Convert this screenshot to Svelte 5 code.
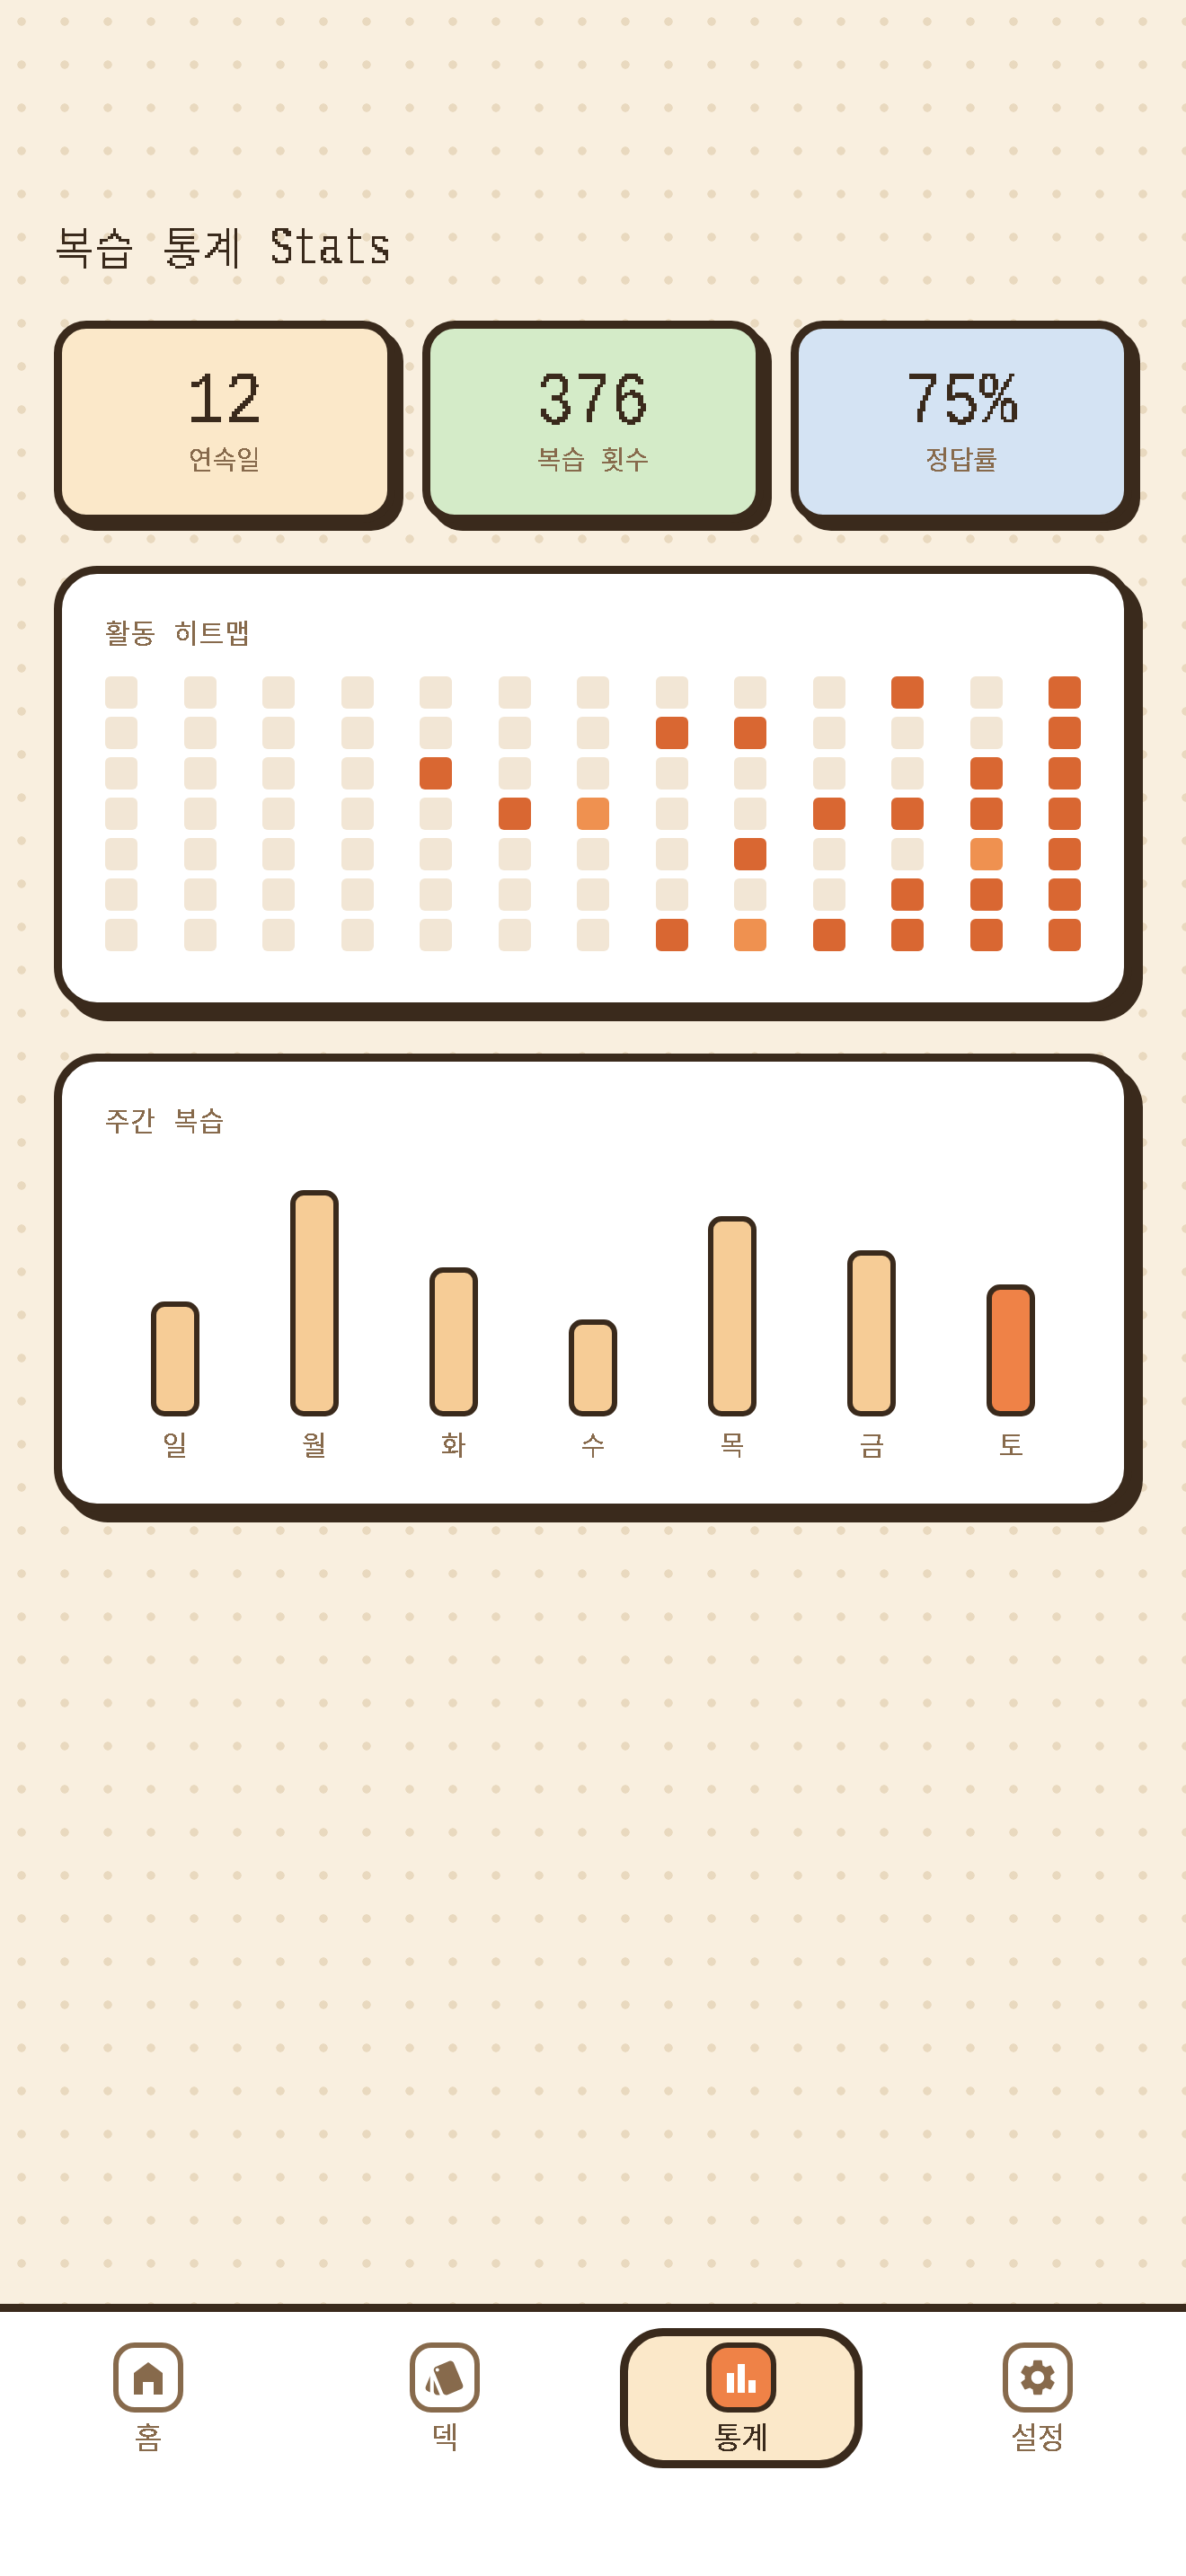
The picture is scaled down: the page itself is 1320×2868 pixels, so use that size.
<script>
  const stats = [
    { value: '12', label: '연속일', cls: 'peach' },
    { value: '376', label: '복습 횟수', cls: 'green' },
    { value: '75%', label: '정답률', cls: 'blue' }
  ];
  const hot = {
    '4-2': 'h', '5-3': 'h', '6-3': 'm', '7-1': 'h', '7-6': 'h', '8-1': 'h', '8-4': 'h', '8-6': 'm',
    '9-3': 'h', '9-6': 'h', '10-0': 'h', '10-3': 'h', '10-5': 'h', '10-6': 'h',
    '11-2': 'h', '11-3': 'h', '11-4': 'm', '11-5': 'h', '11-6': 'h',
    '12-0': 'h', '12-1': 'h', '12-2': 'h', '12-3': 'h', '12-4': 'h', '12-5': 'h', '12-6': 'h'
  };
  const cols = Array.from({ length: 13 }, (_, i) => i);
  const rows = Array.from({ length: 7 }, (_, i) => i);
  const bars = [
    { d: '일', h: 128 }, { d: '월', h: 252 }, { d: '화', h: 166 }, { d: '수', h: 108 },
    { d: '목', h: 223 }, { d: '금', h: 185 }, { d: '토', h: 147, today: true }
  ];
</script>

<svg class="defs" width="0" height="0" aria-hidden="true">
  <filter id="pix" x="0" y="0" width="100%" height="100%" color-interpolation-filters="sRGB">
    <feFlood x="1" y="1" width="1" height="1" flood-color="#000" />
    <feComposite width="3" height="3" />
    <feTile result="grid" />
    <feComposite in="SourceGraphic" in2="grid" operator="in" />
    <feMorphology operator="dilate" radius="1" />
    <feComponentTransfer>
      <feFuncA type="discrete" tableValues="0 0 1 1" />
    </feComponentTransfer>
  </filter>
  <filter id="crisp" x="0" y="0" width="100%" height="100%" color-interpolation-filters="sRGB">
    <feComponentTransfer>
      <feFuncA type="discrete" tableValues="0 1 1" />
    </feComponentTransfer>
  </filter>
</svg>

<div class="page">
  <main>
    <h1>복습 통계 <span class="latin">Stats</span></h1>
    <div class="stats">
      {#each stats as s}
        <div class="stat {s.cls}">
          <div class="value"><span>{s.value}</span></div>
          <div class="label">{s.label}</div>
        </div>
      {/each}
    </div>

    <section class="card heat">
      <h2>활동 히트맵</h2>
      <div class="grid">
        {#each cols as c}
          <div class="col">
            {#each rows as r}
              <span class="cell {hot[c + '-' + r] ?? ''}"></span>
            {/each}
          </div>
        {/each}
      </div>
    </section>

    <section class="card week">
      <h2>주간 복습</h2>
      <div class="bars">
        {#each bars as b}
          <div class="barcol">
            <div class="bar" class:today={b.today} style="height:{b.h}px"></div>
            <span class="day">{b.d}</span>
          </div>
        {/each}
      </div>
    </section>
  </main>

  <nav>
    <div class="item">
      <div class="ic">
        <svg viewBox="0 0 48 48" width="48" height="48"><path d="M8 19 24 7l16 12v24H30V29H18v14H8z" /></svg>
      </div>
      <span class="nl">홈</span>
    </div>
    <div class="item">
      <div class="ic">
        <svg viewBox="0 0 24 24" width="48" height="48"><path d="M2.53 19.65l1.34.56v-9.03l-2.43 5.86c-.41 1.02.08 2.19 1.09 2.61zm19.5-3.7L17.07 3.98c-.31-.75-1.04-1.21-1.81-1.23-.26 0-.53.04-.79.15L7.1 5.95c-.75.31-1.21 1.03-1.23 1.8-.01.27.04.54.15.8l4.96 11.97c.31.76 1.05 1.22 1.83 1.23.26 0 .52-.05.77-.15l7.36-3.05c1.02-.42 1.51-1.59 1.09-2.6zM7.88 8.75c-.55 0-1-.45-1-1s.45-1 1-1 1 .45 1 1-.45 1-1 1zm-2 11c0 1.1.9 2 2 2h1.45l-3.45-8.34v6.34z" /></svg>
      </div>
      <span class="nl">덱</span>
    </div>
    <div class="item active">
      <div class="ic">
        <svg viewBox="0 0 48 48" width="48" height="48"><rect x="8" y="19" width="8" height="22" /><rect x="20" y="9" width="8" height="32" /><rect x="32" y="27" width="8" height="14" /></svg>
      </div>
      <span class="nl">통계</span>
    </div>
    <div class="item">
      <div class="ic">
        <svg viewBox="0 0 24 24" width="48" height="48"><path d="M19.14 12.94c.04-.3.06-.61.06-.94 0-.32-.02-.64-.07-.94l2.03-1.58c.18-.14.23-.41.12-.61l-1.92-3.32c-.12-.22-.37-.29-.59-.22l-2.39.96c-.5-.38-1.03-.7-1.62-.94l-.36-2.54c-.04-.24-.24-.41-.48-.41h-3.84c-.24 0-.43.17-.47.41l-.36 2.54c-.59.24-1.13.57-1.62.94l-2.39-.96c-.22-.08-.47 0-.59.22L2.74 8.87c-.12.21-.08.47.12.61l2.03 1.58c-.05.3-.09.63-.09.94s.02.64.07.94l-2.03 1.58c-.18.14-.23.41-.12.61l1.92 3.32c.12.22.37.29.59.22l2.39-.96c.5.38 1.03.7 1.62.94l.36 2.54c.05.24.24.41.48.41h3.84c.24 0 .44-.17.47-.41l.36-2.54c.59-.24 1.13-.56 1.62-.94l2.39.96c.22.08.47 0 .59-.22l1.92-3.32c.12-.22.07-.47-.12-.61l-2.01-1.58zM12 15.6c-1.98 0-3.6-1.62-3.6-3.6s1.62-3.6 3.6-3.6 3.6 1.62 3.6 3.6-1.62 3.6-3.6 3.6z" /></svg>
      </div>
      <span class="nl">설정</span>
    </div>
  </nav>
</div>

<style>
  :global(body) {
    margin: 0;
    background: #f9efdf;
  }
  .defs { position: absolute; }
  .page {
    height: 2868px;
    display: flex;
    flex-direction: column;
    background-color: #f9efdf;
    background-image: radial-gradient(circle, #e9d9bf 4.4px, transparent 5px);
    background-size: 48px 48px;
    font-family: "Liberation Mono", "Noto Sans CJK KR", monospace;
    color: #3a2a1c;
  }
  main {
    flex: 1;
    padding: 245px 60px 0;
    box-sizing: border-box;
  }
  h1 {
    margin: 0 0 40px;
    font-size: 48px;
    font-weight: 400;
    line-height: 72px;
    height: 72px;
    letter-spacing: 1px;
    filter: url(#pix);
    white-space: nowrap;
  }
  .latin {
    display: inline-block;
    font-size: 62px;
    line-height: 1;
    letter-spacing: 0;
    transform: scaleX(0.73);
    transform-origin: 0 50%;
  }
  .stats {
    display: grid;
    grid-template-columns: repeat(3, 380px);
    gap: 30px;
    margin-bottom: 48px;
  }
  .stat {
    height: 225px;
    box-sizing: border-box;
    border: 9px solid #3a2a1c;
    border-radius: 36px;
    box-shadow: 9px 9px 0 #3a2a1c;
    text-align: center;
    padding-top: 41px;
  }
  .peach { background: #fbe8c9; }
  .green { background: #d4ebc8; }
  .blue { background: #d4e3f3; }
  .value {
    font-size: 84px;
    line-height: 84px;
    font-weight: 400;
    filter: url(#pix);
  }
  .value span {
    display: inline-block;
    transform: scaleX(0.83);
  }
  .label {
    font-size: 29px;
    line-height: 42px;
    margin-top: 4px;
    color: #876a4c;
    filter: url(#crisp);
  }
  .card {
    background: #fff;
    border: 9px solid #3a2a1c;
    border-radius: 48px;
    box-shadow: 12px 12px 0 #3a2a1c;
    box-sizing: border-box;
    width: 1200px;
    padding: 48px;
    margin-bottom: 48px;
  }
  .heat { height: 495px; }
  .week { height: 510px; }
  h2 {
    margin: 0;
    font-size: 30px;
    font-weight: 400;
    line-height: 42px;
    letter-spacing: 1px;
    color: #876a4c;
    filter: url(#crisp);
  }
  .grid {
    display: flex;
    justify-content: space-between;
    margin-top: 24px;
  }
  .col {
    display: flex;
    flex-direction: column;
    gap: 9px;
  }
  .cell {
    display: block;
    width: 36px;
    height: 36px;
    border-radius: 6px;
    background: #f2e6d5;
  }
  .cell.h { background: #d96732; }
  .cell.m { background: #ef9150; }
  .bars {
    display: grid;
    grid-template-columns: repeat(7, 1fr);
    height: 330px;
    margin-top: 31px;
    align-items: end;
  }
  .barcol {
    display: flex;
    flex-direction: column;
    align-items: center;
    gap: 14px;
  }
  .bar {
    width: 54px;
    box-sizing: border-box;
    border: 6px solid #3a2a1c;
    border-radius: 15px;
    background: #f6cc96;
  }
  .bar.today { background: #ef8247; }
  .day {
    font-size: 30px;
    line-height: 42px;
    color: #876a4c;
    filter: url(#crisp);
  }
  nav {
    height: 303px;
    box-sizing: border-box;
    border-top: 9px solid #3a2a1c;
    background: #fff;
    display: grid;
    grid-template-columns: repeat(4, 1fr);
    padding-top: 18px;
    align-items: start;
    justify-items: center;
  }
  .item {
    width: 270px;
    height: 156px;
    box-sizing: border-box;
    border: 9px solid transparent;
    border-radius: 48px;
    padding-top: 7px;
    display: flex;
    flex-direction: column;
    align-items: center;
    gap: 11px;
    color: #876a4c;
    font-size: 33px;
    line-height: 42px;
  }
  .nl { filter: url(#crisp); }
  .item.active {
    background: #fbe8c9;
    border-color: #3a2a1c;
    color: #3a2a1c;
  }
  .ic {
    flex: none;
    width: 78px;
    height: 78px;
    box-sizing: border-box;
    border: 6px solid #876a4c;
    border-radius: 24px;
    display: flex;
    align-items: center;
    justify-content: center;
    fill: #876a4c;
    background: #fff;
  }
  .active .ic {
    border-color: #3a2a1c;
    background: #ef8247;
    fill: #fff;
  }
</style>
